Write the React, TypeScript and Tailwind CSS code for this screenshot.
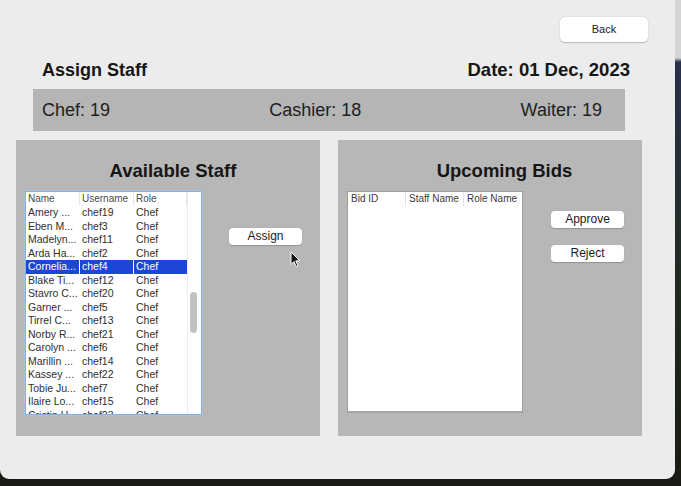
import React from 'react'

const staff: [string, string][] = [
  ['Amery ...', 'chef19'],
  ['Eben M...', 'chef3'],
  ['Madelyn...', 'chef11'],
  ['Arda Ha...', 'chef2'],
  ['Cornelia...', 'chef4'],
  ['Blake Ti...', 'chef12'],
  ['Stavro C...', 'chef20'],
  ['Garner ...', 'chef5'],
  ['Tirrel C...', 'chef13'],
  ['Norby R...', 'chef21'],
  ['Carolyn ...', 'chef6'],
  ['Marillin ...', 'chef14'],
  ['Kassey ...', 'chef22'],
  ['Tobie Ju...', 'chef7'],
  ['Ilaire Lo...', 'chef15'],
  ['Cristin H...', 'chef23'],
]

const SELECTED = 4

function SmallButton({ label }: { label: string }) {
  return (
    <button
      type="button"
      className="block h-[17px] w-[73px] rounded-[4px] bg-white text-[12px] leading-[17px] text-[#1c1c1c] shadow-[0_0.5px_1px_rgba(0,0,0,0.2)]"
    >
      {label}
    </button>
  )
}

function StaffTable() {
  return (
    <div className="flex h-[224px] w-[177px] overflow-hidden border border-[#7fb0ea] bg-white shadow-[0_0_0_0.5px_#a9c9f0]">
      <div className="w-[161px]">
        <div className="grid h-[14px] grid-cols-[54px_54px_53px] text-[10px] leading-[14px] text-[#4a4a4a]">
          <div className="border-r border-[#e6e6e6] pl-[2px]">Name</div>
          <div className="border-r border-[#e6e6e6] pl-[2px]">Username</div>
          <div className="border-r border-[#e6e6e6] pl-[2px]">Role</div>
        </div>
        {staff.map(([name, user], i) => (
          <div
            key={user}
            className={
              i === SELECTED
                ? 'grid h-[13.5px] grid-cols-[54px_54px_53px] bg-[#1d46d6] text-[10.5px] leading-[13.5px] text-white'
                : 'grid h-[13.5px] grid-cols-[54px_54px_53px] text-[10.5px] leading-[13.5px] text-[#303030]'
            }
          >
            <div className={i === SELECTED ? 'border-r border-white pl-[2px]' : 'pl-[2px]'}>{name}</div>
            <div className={i === SELECTED ? 'border-r border-white pl-[2px]' : 'pl-[2px]'}>{user}</div>
            <div className="pl-[2px]">Chef</div>
          </div>
        ))}
      </div>
      <div className="flex w-[14px] flex-col border-l border-[#ececec] pl-[2px]">
        <div className="mt-[100px] h-[41px] w-[7px] rounded-full bg-[#c2c2c2]" />
      </div>
    </div>
  )
}

function BidsTable() {
  return (
    <div className="h-[222px] w-[176px] border border-[#9d9d9d] border-b-[2px] border-b-[#a8a8a8] bg-white">
      <div className="grid h-[14px] grid-cols-[58px_58px_58px] text-[10px] leading-[14px] text-[#3a3a3a]">
        <div className="border-r border-[#e4e4e4] pl-[3px]">Bid ID</div>
        <div className="border-r border-[#e4e4e4] pl-[3px]">Staff Name</div>
        <div className="pl-[3px]">Role Name</div>
      </div>
    </div>
  )
}

function Cursor() {
  return (
    <svg
      className="absolute left-[290px] top-[251px]"
      width="11"
      height="17"
      viewBox="0 0 11 17"
    >
      <path
        d="M1 1 L1 13.5 L4 10.5 L6.3 15.5 L8 14.8 L5.8 9.8 L9.8 9.8 Z"
        fill="#111"
        stroke="#fff"
        strokeWidth="1"
        strokeLinejoin="round"
      />
    </svg>
  )
}

export default function App() {
  return (
    <div className="relative flex h-[486px] w-[681px] items-start bg-[linear-gradient(180deg,#d4d4d4_0px,#d4d4d4_58px,#27324a_62px,#1f2a1d_300px,#191a13_486px)] font-['Liberation_Sans',Arial,sans-serif]">
      <div className="flex h-[479px] w-[675px] flex-col rounded-b-[9px] bg-[#ececec]">
        <div className="flex justify-end pr-[27px] pt-[17px]">
          <button
            type="button"
            className="h-[25px] w-[88px] rounded-[5px] bg-white text-[11px] text-[#222] shadow-[0_0.5px_1.5px_rgba(0,0,0,0.22)]"
          >
            Back
          </button>
        </div>

        <div className="mt-[17px] flex justify-between pl-[42px] pr-[45px] text-[18px] font-bold leading-[22px] text-[#161616]">
          <span>Assign Staff</span>
          <span className="text-[18.5px]">Date: 01 Dec, 2023</span>
        </div>

        <div className="ml-[33px] mt-[8px] flex h-[42px] w-[592px] items-center justify-between bg-[#b5b5b5] pl-[9px] pr-[23px] text-[18px] text-[#1e1e1e]">
          <span>Chef: 19</span>
          <span>Cashier: 18</span>
          <span>Waiter: 19</span>
        </div>

        <div className="ml-[16px] mt-[9px] flex gap-[18px]">
          <div className="flex h-[296px] w-[304px] flex-col bg-[#b7b7b7] pt-[20px]">
            <h2 className="pl-[10px] text-center text-[18.5px] font-bold leading-[22px] text-[#161616]">Available Staff</h2>
            <div className="ml-[9px] mt-[9px] flex items-start">
              <StaffTable />
              <div className="ml-[27px] mt-[37px] flex">
                <SmallButton label="Assign" />
              </div>
            </div>
          </div>

          <div className="flex h-[296px] w-[304px] flex-col bg-[#b7b7b7] pt-[20px]">
            <h2 className="pl-[29px] text-center text-[18.5px] font-bold leading-[22px] text-[#161616]">Upcoming Bids</h2>
            <div className="ml-[9px] mt-[9px] flex items-start">
              <BidsTable />
              <div className="ml-[28px] mt-[20px] flex flex-col gap-[17px]">
                <SmallButton label="Approve" />
                <SmallButton label="Reject" />
              </div>
            </div>
          </div>
        </div>
      </div>
      <Cursor />
    </div>
  )
}
